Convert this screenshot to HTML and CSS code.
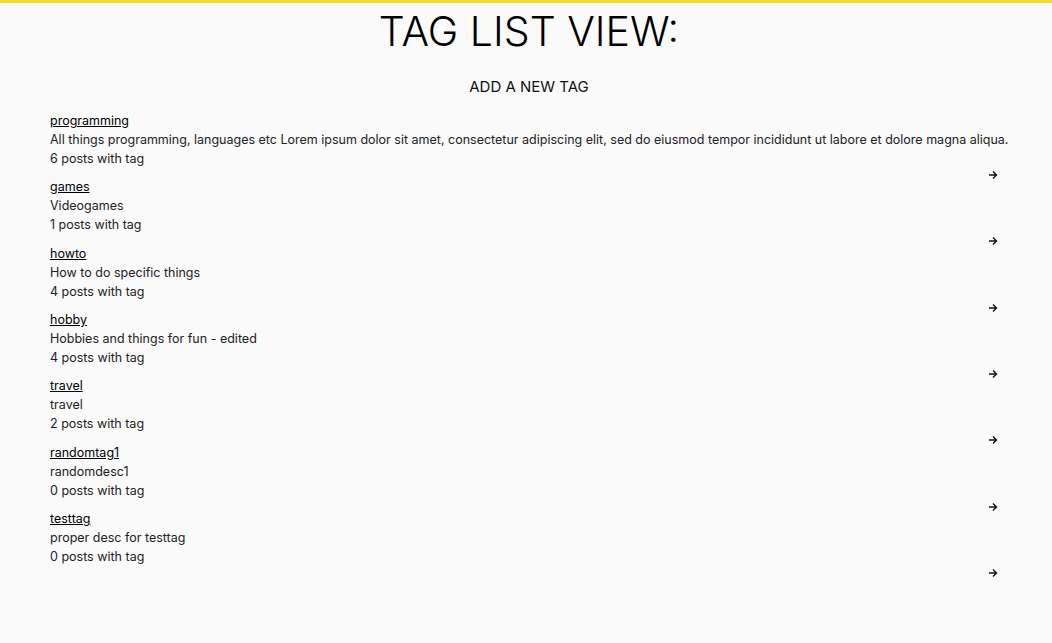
FILE: index.html
```html
<!DOCTYPE html>
<html>
<head>
<meta charset="utf-8">
<link rel="stylesheet" href="styles.css">
</head>
<body>
<header class="top">
  <h1 class="title">TAG LIST VIEW:</h1>
  <a class="add" href="#">ADD A NEW TAG</a>
</header>
<main class="list">
  <div class="tag">
    <a class="name" href="#">programming</a>
    <div class="desc">All things programming, languages etc Lorem ipsum dolor sit amet, consectetur adipiscing elit, sed do eiusmod tempor incididunt ut labore et dolore magna aliqua.</div>
    <div class="count">6 posts with tag</div>
    <div class="go"><svg width="10" height="10" viewBox="0 0 10 10"><path d="M1 5H8.5M5 1.5L8.5 5L5 8.5" fill="none" stroke="#111" stroke-width="1.4"/></svg></div>
  </div>
  <div class="tag">
    <a class="name" href="#">games</a>
    <div class="desc">Videogames</div>
    <div class="count">1 posts with tag</div>
    <div class="go"><svg width="10" height="10" viewBox="0 0 10 10"><path d="M1 5H8.5M5 1.5L8.5 5L5 8.5" fill="none" stroke="#111" stroke-width="1.4"/></svg></div>
  </div>
  <div class="tag">
    <a class="name" href="#">howto</a>
    <div class="desc">How to do specific things</div>
    <div class="count">4 posts with tag</div>
    <div class="go"><svg width="10" height="10" viewBox="0 0 10 10"><path d="M1 5H8.5M5 1.5L8.5 5L5 8.5" fill="none" stroke="#111" stroke-width="1.4"/></svg></div>
  </div>
  <div class="tag">
    <a class="name" href="#">hobby</a>
    <div class="desc">Hobbies and things for fun - edited</div>
    <div class="count">4 posts with tag</div>
    <div class="go"><svg width="10" height="10" viewBox="0 0 10 10"><path d="M1 5H8.5M5 1.5L8.5 5L5 8.5" fill="none" stroke="#111" stroke-width="1.4"/></svg></div>
  </div>
  <div class="tag">
    <a class="name" href="#">travel</a>
    <div class="desc">travel</div>
    <div class="count">2 posts with tag</div>
    <div class="go"><svg width="10" height="10" viewBox="0 0 10 10"><path d="M1 5H8.5M5 1.5L8.5 5L5 8.5" fill="none" stroke="#111" stroke-width="1.4"/></svg></div>
  </div>
  <div class="tag">
    <a class="name" href="#">randomtag1</a>
    <div class="desc">randomdesc1</div>
    <div class="count">0 posts with tag</div>
    <div class="go"><svg width="10" height="10" viewBox="0 0 10 10"><path d="M1 5H8.5M5 1.5L8.5 5L5 8.5" fill="none" stroke="#111" stroke-width="1.4"/></svg></div>
  </div>
  <div class="tag">
    <a class="name" href="#">testtag</a>
    <div class="desc">proper desc for testtag</div>
    <div class="count">0 posts with tag</div>
    <div class="go"><svg width="10" height="10" viewBox="0 0 10 10"><path d="M1 5H8.5M5 1.5L8.5 5L5 8.5" fill="none" stroke="#111" stroke-width="1.4"/></svg></div>
  </div>
</main>
</body>
</html>
```
FILE: styles.css
```css
html, body {
  margin: 0;
  padding: 0;
}
body {
  background: #fafafa;
  border-top: 3px solid #f2dc2e;
  font-family: Inter, "Noto Sans", sans-serif;
  color: #222;
  min-height: 640px;
}
.top {
  display: flex;
  flex-direction: column;
  align-items: center;
  padding-left: 6px;
}
.title {
  margin: 4px 0 0;
  font-size: 41px;
  font-weight: 300;
  line-height: 48px;
  color: #000;
}
.add {
  margin-top: 22px;
  font-size: 15px;
  line-height: 20px;
  color: #111;
  text-decoration: none;
}
.list {
  padding: 0 44px 0 50px;
  margin-top: 14px;
}
.tag {
  font-size: 12.5px;
  line-height: 19px;
}
.name {
  color: #000;
  text-decoration: underline;
}
.desc, .count {
  white-space: nowrap;
}
.go {
  display: flex;
  justify-content: flex-end;
  height: 9.33px;
  padding-right: 10px;
}
.go svg {
  display: block;
  margin-top: 2px;
}
```
